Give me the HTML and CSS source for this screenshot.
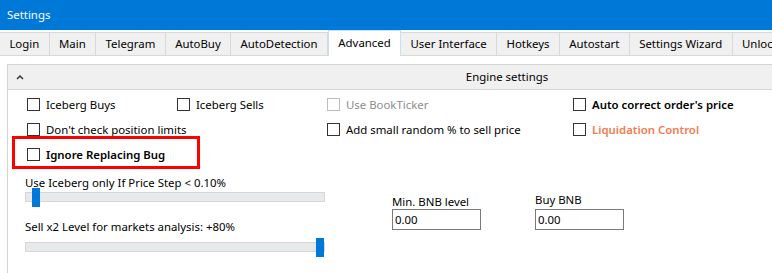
FILE: index.html
```html
<!DOCTYPE html>
<html lang="en">
  <head>
    <meta charset="UTF-8" />
    <meta name="viewport" content="width=device-width, initial-scale=1.0" />
    <title>Settings</title>
    <link rel="stylesheet" href="styles.css">
  </head>

  <body>
    <div class="window">
      <div class="titlebar">Settings</div>

      <div class="tabs">
        <div class="tab">Login</div>
        <div class="tab">Main</div>
        <div class="tab">Telegram</div>
        <div class="tab">AutoBuy</div>
        <div class="tab">AutoDetection</div>
        <div class="tab active">Advanced</div>
        <div class="tab">User Interface</div>
        <div class="tab">Hotkeys</div>
        <div class="tab">Autostart</div>
        <div class="tab">Settings Wizard</div>
        <div class="tab">Unlock</div>
      </div>

      <div class="page">
        <div class="expander">
          <div class="expander-head">
            <svg class="chevron" width="8" height="6" viewBox="0 0 8 6">
              <path d="M1 5 L4 2 L7 5" fill="none" stroke="#333" stroke-width="1.5" />
            </svg>
            <span class="expander-title">Engine settings</span>
          </div>

          <div class="expander-body">
            <div class="checks">
              <label class="check"><span class="box"></span>Iceberg Buys</label>
              <label class="check"><span class="box"></span>Iceberg Sells</label>
              <label class="check disabled"><span class="box"></span>Use BookTicker</label>
              <label class="check bold"><span class="box"></span>Auto correct order's price</label>

              <label class="check wide"><span class="box"></span>Don't check position limits</label>
              <label class="check"><span class="box"></span>Add small random % to sell price</label>
              <label class="check bold warn"><span class="box"></span>Liquidation Control</label>

              <label class="check wide bold marked"><span class="box"></span>Ignore Replacing Bug</label>
            </div>

            <div class="lower">
              <div class="sliders">
                <div class="slider-label">Use Iceberg only If Price Step &lt; 0.10%</div>
                <div class="slider">
                  <div class="track"></div>
                  <div class="thumb" style="left: 7px"></div>
                </div>
                <div class="slider-label second">Sell x2 Level for markets analysis: +80%</div>
                <div class="slider">
                  <div class="track"></div>
                  <div class="thumb" style="left: 291px"></div>
                </div>
              </div>

              <div class="fields">
                <div class="field">
                  <div class="field-label">Min. BNB level</div>
                  <input type="text" value="0.00" />
                </div>
                <div class="field raised">
                  <div class="field-label">Buy BNB</div>
                  <input type="text" value="0.00" />
                </div>
              </div>
            </div>
          </div>
        </div>
      </div>
    </div>
  </body>
</html>
```

FILE: styles.css
```css
body {
  margin: 0;
  width: 772px;
  height: 273px;
  overflow: hidden;
  background-color: #ffffff;
  font-family: "Noto Sans", sans-serif;
  font-size: 11.4px;
  color: #000;
}

.window {
  width: 1007px;
}

.titlebar {
  height: 30px;
  line-height: 30px;
  padding-left: 7px;
  background-color: #0078d7;
  color: #fff;
}

.tabs {
  display: flex;
  margin-top: 2px;
  border-bottom: 1px solid #d9d9d9;
  height: 23px;
}

.tab {
  padding: 0 9.4px;
  line-height: 22px;
  background-color: #f0f0f0;
  border: 1px solid #d9d9d9;
  border-left: none;
  border-bottom: none;
  white-space: nowrap;
}

.tab.active {
  background-color: #fff;
  border: 1px solid #c9dff2;
  border-bottom: none;
  margin-top: -2px;
  line-height: 24px;
  height: 25px;
}

.page {
  padding: 8px 0 0 7px;
}

.expander {
  border: 1px solid #d5d5d5;
  height: 220px;
}

.expander-head {
  position: relative;
  height: 24px;
  line-height: 24px;
  background-color: #f0f0f0;
  border-bottom: 1px solid #d5d5d5;
  text-align: center;
}

.chevron {
  position: absolute;
  left: 8px;
  top: 9px;
}

.expander-body {
  padding: 2px 0 0 19px;
}

.checks {
  display: grid;
  grid-template-columns: 150px 150px 246px 200px;
  grid-auto-rows: 25px;
  align-items: center;
}

.check {
  display: flex;
  align-items: center;
  gap: 6px;
  white-space: nowrap;
}

.check .box {
  width: 11px;
  height: 11px;
  border: 1px solid #333;
  background-color: #fff;
  flex-shrink: 0;
}

.check.wide {
  grid-column: 1 / 3;
}

.check.bold {
  font-weight: 600;
}

.check.disabled {
  color: #8c8c8c;
}

.check.disabled .box {
  border-color: #bcbcbc;
}

.check.warn {
  color: #f47a50;
}

.check.marked {
  position: relative;
}

.check.marked::before {
  content: "";
  position: absolute;
  left: -15px;
  top: -11px;
  width: 182px;
  height: 27px;
  border: 3px solid #f00;
}

.lower {
  display: flex;
  margin-left: -2px;
  padding-top: 8px;
}

.sliders {
  width: 300px;
}

.slider-label {
  line-height: 16px;
  margin-bottom: -3px;
}

.slider-label.second {
  margin-top: 11px;
  margin-bottom: 3px;
}

.slider {
  position: relative;
  height: 20px;
}

.track {
  position: absolute;
  left: 0;
  right: 0;
  top: 4px;
  height: 8px;
  background-color: #e7eaea;
  border: 1px solid #d6d6d6;
}

.thumb {
  position: absolute;
  top: 0;
  width: 8px;
  height: 19px;
  background-color: #0078d7;
}

.fields {
  display: flex;
  margin-left: 67px;
  padding-top: 20px;
}

.field {
  width: 143px;
}

.field-label {
  line-height: 14px;
}

.field.raised .field-label {
  margin-top: -2px;
  margin-bottom: 2px;
}

input {
  width: 83px;
  height: 17px;
  padding: 1px 2px;
  margin: 0;
  border: 1px solid #7a7a7a;
  font-family: "Noto Sans", sans-serif;
  font-size: 11.4px;
}
```
